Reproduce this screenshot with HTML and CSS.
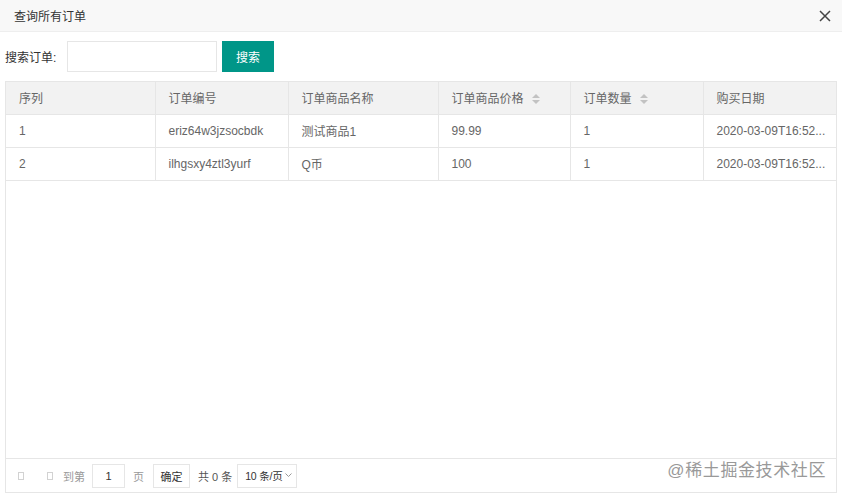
FILE: index.html
```html
<!DOCTYPE html>
<html>
<head>
<meta charset="utf-8">
<link rel="stylesheet" href="styles.css">
</head>
<body>
<div class="dialog">
  <div class="titlebar">
    <span class="title">查询所有订单</span>
    <svg class="close" width="12" height="12" viewBox="0 0 12 12"><path d="M1 1L11 11M11 1L1 11" stroke="#444" stroke-width="1.5" fill="none"/></svg>
  </div>
  <div class="searchbar">
    <label class="search-label">搜索订单:</label>
    <input class="search-input" type="text">
    <button class="search-btn">搜索</button>
  </div>
  <div class="table-box">
    <table class="grid">
      <colgroup>
        <col class="c1"><col class="c2"><col class="c3"><col class="c4"><col class="c5"><col>
      </colgroup>
      <thead>
        <tr>
          <th>序列</th>
          <th>订单编号</th>
          <th>订单商品名称</th>
          <th>订单商品价格<span class="sort"><i class="up"></i><i class="down"></i></span></th>
          <th>订单数量<span class="sort"><i class="up"></i><i class="down"></i></span></th>
          <th>购买日期</th>
        </tr>
      </thead>
      <tbody>
        <tr><td>1</td><td>eriz64w3jzsocbdk</td><td>测试商品1</td><td>99.99</td><td>1</td><td>2020-03-09T16:52...</td></tr>
        <tr><td>2</td><td>ilhgsxy4ztl3yurf</td><td>Q币</td><td>100</td><td>1</td><td>2020-03-09T16:52...</td></tr>
      </tbody>
    </table>
    <div class="spacer"></div>
    <div class="pager">
      <span class="pbox first"></span>
      <span class="pbox second"></span>
      <span class="ptxt goto">到第</span>
      <span class="pinput">1</span>
      <span class="ptxt page">页</span>
      <span class="pbtn">确定</span>
      <span class="ptxt dark">共 0 条</span>
      <span class="psel"><span class="psel-text">10 条/页</span><svg width="7" height="5" viewBox="0 0 7 5"><path d="M0.5 0.5L3.5 3.5L6.5 0.5" stroke="#999" fill="none"/></svg></span>
      <span class="watermark">@稀土掘金技术社区</span>
    </div>
  </div>
</div>
</body>
</html>
```
FILE: styles.css
```css
* { box-sizing: border-box; }
html, body { margin: 0; padding: 0; background: #fff; }
body { font-family: "Liberation Sans", "Noto Sans CJK SC", sans-serif; font-size: 12px; color: #666; }
.dialog { width: 842px; height: 495px; display: flex; flex-direction: column; }
.titlebar { height: 32px; background: #f8f8f8; border-bottom: 1px solid #eee; display: flex; align-items: center; justify-content: space-between; padding: 0 11px 0 14px; flex: none; }
.title { color: #333; font-size: 12px; }
.close { display: block; }
.searchbar { display: flex; align-items: center; padding: 0 0 0 5px; height: 49px; flex: none; }
.search-label { color: #333; font-size: 12px; width: 62px; }
.search-input { width: 150px; height: 31px; border: 1px solid #e6e6e6; margin: 0; padding: 0 8px; outline: none; }
.search-btn { width: 52px; height: 31px; margin-left: 5px; border: none; background: #009688; color: #fff; font-family: inherit; font-size: 12px; padding: 0; }
.table-box { margin: 0 5px 2px 5px; border: 1px solid #e6e6e6; flex: 1; display: flex; flex-direction: column; }
.grid { border-collapse: collapse; table-layout: fixed; width: 100%; }
.c1 { width: 149px; }
.c2 { width: 133px; }
.c3 { width: 150px; }
.c4 { width: 132px; }
.c5 { width: 133px; }
.grid th, .grid td { height: 32px; padding: 0 8px 0 13px; text-align: left; font-weight: normal; border-right: 1px solid #e6e6e6; border-bottom: 1px solid #e6e6e6; color: #666; font-size: 12px; white-space: nowrap; overflow: hidden; }
.grid th:last-child, .grid td:last-child { border-right: none; }
.grid thead tr { background: #f2f2f2; }
.grid tbody td { height: 33px; }
.sort { display: inline-flex; flex-direction: column; gap: 2px; margin-left: 8px; vertical-align: middle; position: relative; top: -1px; }
.sort i { display: block; width: 0; height: 0; border-left: 4px solid transparent; border-right: 4px solid transparent; }
.sort .up { border-bottom: 4px solid #c2c2c2; }
.sort .down { border-top: 4px solid #c2c2c2; }
.spacer { flex: 1; }
.pager { height: 34px; border-top: 1px solid #e6e6e6; display: flex; align-items: center; padding-left: 12px; font-size: 11px; }
.pager > * { flex: none; }
.pbox { width: 6px; height: 8px; border: 1px solid #d2d2d2; }
.pbox.first { margin-right: 23px; }
.pbox.second { margin-right: 10px; }
.ptxt { color: #999; font-size: 11px; white-space: nowrap; }
.ptxt.goto { margin-right: 7px; }
.ptxt.page { margin-left: 8px; margin-right: 9px; }
.ptxt.dark { color: #555; margin-left: 8px; margin-right: 5px; }
.pinput { width: 33px; height: 24px; border: 1px solid #e6e6e6; display: flex; align-items: center; justify-content: center; color: #333; }
.pbtn { width: 37px; height: 24px; border: 1px solid #e6e6e6; display: flex; align-items: center; justify-content: center; color: #333; }
.psel { width: 60px; height: 24px; border: 1px solid #e6e6e6; display: flex; align-items: center; justify-content: space-between; padding: 0 4px 0 7px; color: #333; white-space: nowrap; }
.psel-text { font-size: 10.5px; letter-spacing: -0.2px; }
.watermark { margin-left: auto; margin-right: 10px; margin-top: -14px; color: #999; font-size: 17px; letter-spacing: 0.6px; white-space: nowrap; }
```
